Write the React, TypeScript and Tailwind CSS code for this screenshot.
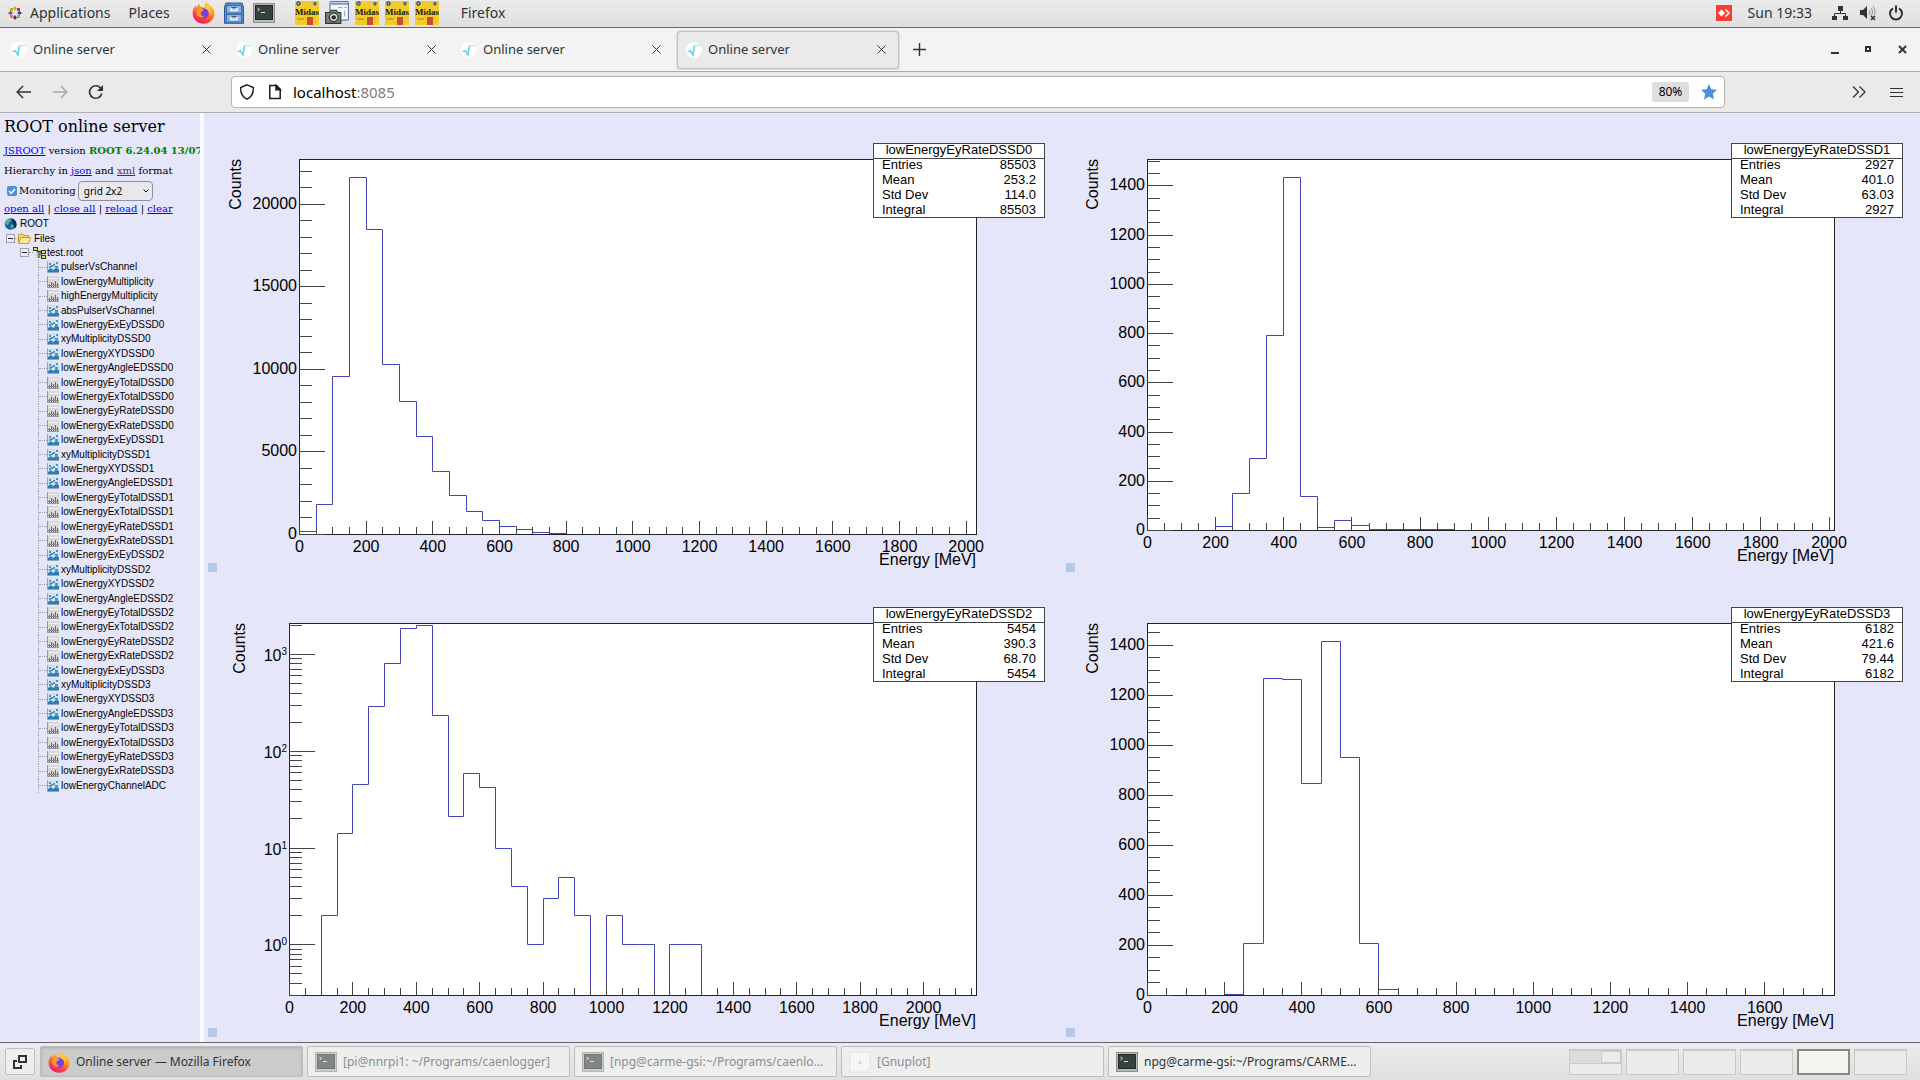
import { useState } from "react";
import type { ReactNode } from "react";

interface HistogramData {
  name: string;
  stats: [string, string][];
  values: number[];
  xMax: number;
  yMin: number;
  yMax: number;
  yMajor: number;
  yMinor: number;
  log?: boolean;
  left: number;
  bottom: number;
  titleX: number;
}

const BIN_WIDTH = 50;
const FRAME_TOP = 46;
const FRAME_RIGHT = 772;

const histograms: HistogramData[] = [
  {
    name: "lowEnergyEyRateDSSD0",
    stats: [
      ["Entries", "85503"],
      ["Mean", "253.2"],
      ["Std Dev", "114.0"],
      ["Integral", "85503"],
    ],
    values: [161, 1835, 9576, 21631, 18486, 10301, 8023, 5947, 3810, 2360, 1390, 867, 504, 282, 121, 40],
    xMax: 2031,
    yMin: 0,
    yMax: 22703,
    yMajor: 5000,
    yMinor: 1000,
    left: 95,
    bottom: 421,
    titleX: 37,
  },
  {
    name: "lowEnergyEyRateDSSD1",
    stats: [
      ["Entries", "2927"],
      ["Mean", "401.0"],
      ["Std Dev", "63.03"],
      ["Integral", "2927"],
    ],
    values: [0, 0, 0, 0, 15, 149, 294, 794, 1435, 138, 12, 42, 22, 3, 5, 3, 3, 3],
    xMax: 2016,
    yMin: 0,
    yMax: 1507,
    yMajor: 200,
    yMinor: 50,
    left: 85,
    bottom: 417,
    titleX: 36,
  },
  {
    name: "lowEnergyEyRateDSSD2",
    stats: [
      ["Entries", "5454"],
      ["Mean", "390.3"],
      ["Std Dev", "68.70"],
      ["Integral", "5454"],
    ],
    values: [0, 0, 2, 14, 45, 292, 807, 1858, 1980, 234, 21, 59, 42, 10, 4, 1, 3, 5, 2, 0, 2, 1, 1, 0, 1, 1],
    xMax: 2167,
    yMin: 0.299,
    yMax: 2093,
    yMajor: 10,
    yMinor: 1,
    log: true,
    left: 85,
    bottom: 418,
    titleX: 41,
  },
  {
    name: "lowEnergyEyRateDSSD3",
    stats: [
      ["Entries", "6182"],
      ["Mean", "421.6"],
      ["Std Dev", "79.44"],
      ["Integral", "6182"],
    ],
    values: [0, 0, 0, 0, 4, 206, 1269, 1265, 849, 1416, 952, 206, 22],
    xMax: 1781,
    yMin: 0,
    yMax: 1487,
    yMajor: 200,
    yMinor: 50,
    left: 85,
    bottom: 418,
    titleX: 36,
  },
];

const detectorItems = [0, 1, 2, 3].flatMap((n) => [
  { name: `lowEnergyExEyDSSD${n}`, is2d: true },
  { name: `xyMultiplicityDSSD${n}`, is2d: true },
  { name: `lowEnergyXYDSSD${n}`, is2d: true },
  { name: `lowEnergyAngleEDSSD${n}`, is2d: true },
  { name: `lowEnergyEyTotalDSSD${n}`, is2d: false },
  { name: `lowEnergyExTotalDSSD${n}`, is2d: false },
  { name: `lowEnergyEyRateDSSD${n}`, is2d: false },
  { name: `lowEnergyExRateDSSD${n}`, is2d: false },
]);

const treeItems = [
  { name: "pulserVsChannel", is2d: true },
  { name: "lowEnergyMultiplicity", is2d: false },
  { name: "highEnergyMultiplicity", is2d: false },
  { name: "absPulserVsChannel", is2d: true },
  ...detectorItems,
  { name: "lowEnergyChannelADC", is2d: true },
];

function range(step: number, max: number) {
  const out: number[] = [];
  for (let v = 0; v <= max; v += step) out.push(v);
  return out;
}

function logTicks(min: number, max: number) {
  const out: { value: number; exponent: number | null }[] = [];
  for (let e = -1; e <= 3; e++) {
    for (let m = 1; m < 10; m++) {
      const value = m * 10 ** e;
      if (value >= min && value <= max) {
        out.push({ value, exponent: m === 1 ? e : null });
      }
    }
  }
  return out;
}

function Histogram({ data }: { data: HistogramData }) {
  const { left, bottom } = data;
  const toX = (v: number) => left + (v / data.xMax) * (FRAME_RIGHT - left);
  const toY = (v: number) => {
    if (data.log) {
      if (v < data.yMin) return bottom;
      const span = Math.log10(data.yMax / data.yMin);
      return bottom - (Math.log10(v / data.yMin) / span) * (bottom - FRAME_TOP);
    }
    return bottom - (v / data.yMax) * (bottom - FRAME_TOP);
  };
  const snap = (v: number) => Math.round(v) + 0.5;

  let outline = `M${snap(left)} ${snap(bottom)}`;
  data.values.forEach((v, i) => {
    outline += `V${snap(toY(v))}H${snap(toX((i + 1) * BIN_WIDTH))}`;
  });
  outline += `V${snap(bottom)}H${snap(FRAME_RIGHT)}`;

  const yTicks = data.log
    ? logTicks(data.yMin, data.yMax).map((t) => ({ value: t.value, major: t.exponent !== null, exponent: t.exponent }))
    : range(data.yMinor, data.yMax).map((v) => ({ value: v, major: v % data.yMajor === 0, exponent: null }));

  return (
    <div className="relative min-h-0 min-w-0">
      <svg
        viewBox="0 0 858 464"
        preserveAspectRatio="xMidYMin"
        className="block h-full w-full font-['Liberation_Sans',Arial,sans-serif] text-base"
        role="img"
        aria-label={data.name}
      >
        <rect x={left + 0.5} y={FRAME_TOP + 0.5} width={FRAME_RIGHT - left} height={bottom - FRAME_TOP} fill="#fff" />
        <path d={outline} fill="none" stroke="#4444bb" />
        <rect
          x={left + 0.5}
          y={FRAME_TOP + 0.5}
          width={FRAME_RIGHT - left}
          height={bottom - FRAME_TOP}
          fill="none"
          stroke="#222"
        />
        {range(BIN_WIDTH, data.xMax).map((v) => (
          <g key={v}>
            <path d={`M${snap(toX(v))} ${bottom}v${v % 200 === 0 ? -13 : -7}`} stroke="#444" />
            {v % 200 === 0 && (
              <text x={toX(v) + 0.5} y={bottom + 18} textAnchor="middle">
                {v}
              </text>
            )}
          </g>
        ))}
        {yTicks.map((t) => (
          <g key={t.value}>
            <path d={`M${left} ${snap(toY(t.value))}h${t.major ? 26 : 13}`} stroke="#444" />
            {t.major && t.exponent === null && (
              <text x={left - 2} y={toY(t.value) + 5} textAnchor="end">
                {t.value}
              </text>
            )}
            {t.exponent !== null && (
              <text x={left - 2} y={toY(t.value) + 7} textAnchor="end">
                10
                <tspan dy={-6} className="text-[10px]">
                  {t.exponent}
                </tspan>
              </text>
            )}
          </g>
        ))}
        <text x={FRAME_RIGHT} y={bottom + 31} textAnchor="end">
          Energy [MeV]
        </text>
        <text transform={`translate(${data.titleX} ${FRAME_TOP}) rotate(-90)`} textAnchor="end">
          Counts
        </text>
        <g className="text-[13px]">
          <rect x="669.5" y="30.5" width="171" height="74" fill="#fff" stroke="#444" />
          <path d="M669 45.5h172" stroke="#444" />
          <text x="755" y="41" textAnchor="middle">
            {data.name}
          </text>
          {data.stats.map(([label, value], i) => (
            <g key={label}>
              <text x="678" y={56 + i * 15}>
                {label}
              </text>
              <text x="832" y={56 + i * 15} textAnchor="end">
                {value}
              </text>
            </g>
          ))}
        </g>
      </svg>
      <button aria-label="Toggle toolbar" className="absolute bottom-[5px] left-1 size-[9px] bg-[#b6c8e8]" />
    </div>
  );
}

/* ---------- icons ---------- */

function FirefoxIcon({ className }: { className: string }) {
  return (
    <svg viewBox="0 0 24 24" className={className}>
      <defs>
        <linearGradient id="ff-body" x1="0.8" y1="0" x2="0.3" y2="1">
          <stop offset="0" stopColor="#ffe14a" />
          <stop offset="0.45" stopColor="#ff8a1e" />
          <stop offset="0.75" stopColor="#ff3d48" />
          <stop offset="1" stopColor="#e3187a" />
        </linearGradient>
      </defs>
      <path
        d="M15 0.5c.8 2 2.500 3.200 4 4.300 2.700 2 4.500 4.700 4.500 8.200C23.500 19 18.500 23.700 12.300 23.700 5.800 23.700.7 19 .7 12.800.7 9.400 2 6.800 3.800 4.800c.1 1 .5 1.700 1 2.200C5.500 5 6.500 3.600 8 2.900c-.2 1.600.5 2.800 2 3.500 1.500-.2 2.700 0 3.600.4C12.700 4.500 13.300 2.200 15 .5z"
        fill="url(#ff-body)"
      />
      <circle cx="12.300" cy="13" r="5.200" fill="#7542e5" />
      <path d="M5 8.500c3-1.500 6-.8 7.500 1.500-2 .2-3 1-3.500 2.500 0 2 1.500 3.500 3.800 3.500-3.500 2.500-8 .5-8.300-3.500z" fill="#ff9a2e" />
      <path d="M14 8c3 .5 4.500 3 4 6 1.500-1 2.200-4.500.8-7.500-1-1.800-3-3-4-4.500-.8 2.500-.8 4-.8 6z" fill="#ffc83a" />
    </svg>
  );
}

function TerminalIcon({ className }: { className: string }) {
  return (
    <svg viewBox="0 0 22 22" className={className}>
      <rect x="0.5" y="1.500" width="21" height="19" fill="#b8bab6" stroke="#8d8f8b" />
      <rect x="2.500" y="3.500" width="17" height="14" fill="#37423f" stroke="#222b29" />
      <path d="M4.500 6l2 1.500-2 1.500M8 10.500h4" stroke="#dfe6e3" fill="none" />
    </svg>
  );
}

function CabinetIcon() {
  return (
    <svg viewBox="0 0 20 22" className="h-[22px] w-5">
      <path d="M2 1h16l1.500 4v16.300H.5V5z" fill="#5d8fcb" stroke="#2c5a94" />
      <rect x="2.500" y="3.500" width="15" height="7.500" fill="#8db6e4" stroke="#3b6ba8" />
      <rect x="2.500" y="12.500" width="15" height="7.500" fill="#8db6e4" stroke="#3b6ba8" />
      <path d="M7 6v2.500h6V6M7 15v2.500h6V15" fill="none" stroke="#f5f5f5" strokeWidth="1.500" />
      <path d="M7.500 5.500h5M7.500 14.500h5" stroke="#4a4f55" />
    </svg>
  );
}

function MidasIcon() {
  return (
    <svg viewBox="0 0 24 24" className="size-6 font-['Liberation_Serif',serif]">
      <rect width="24" height="24" fill="#f3cb2a" />
      <circle cx="3.500" cy="2.500" r="2.200" fill="#27508c" />
      <circle cx="3.500" cy="2.500" r="0.800" fill="#dfe8f5" />
      <path d="M18.500 1h3v2.500l-1.500 1.500-1.500-1.500z" fill="#54648c" />
      <text x="12" y="13.500" textAnchor="middle" fontSize="9" fontWeight="bold" fill="#1c1a10">
        Midas
      </text>
      <path d="M2 18h7" stroke="#a5861a" />
      <rect x="12" y="16" width="6" height="8" fill="#d8462c" />
      <path d="M15 18v3" stroke="#6a6f95" strokeWidth="2" />
    </svg>
  );
}

function CameraIcon() {
  return (
    <svg viewBox="0 0 22 22" className="size-6">
      <rect x="4.500" y="0.500" width="17" height="17" rx="1" fill="#f4f6f9" stroke="#5c789e" />
      <path d="M5 2.500h16" stroke="#7b99c2" strokeWidth="2" />
      <path d="M12 6h4M18 6h2M18 9v5" stroke="#9aa6b8" />
      <path d="M.5 10.500h4l1-2h5l1 2h3v10H.5z" fill="#7b7f7c" stroke="#313432" />
      <circle cx="8" cy="15" r="4" fill="#d5d9d7" stroke="#222" />
      <circle cx="8" cy="15" r="2" fill="#252b35" />
    </svg>
  );
}

function AppsLogo() {
  return (
    <svg viewBox="0 0 14 14" className="size-[14px]">
      <path d="M7 0l2 2.500L7 5 5 2.500z" fill="#e8a317" />
      <path d="M7 9l2 2.500L7 14l-2-2.500z" fill="#3d3b8e" />
      <path d="M0 7l2.500-2L5 7 2.500 9z" fill="#a2398c" />
      <path d="M9 7l2.500-2L14 7l-2.500 2z" fill="#46358f" />
      <path d="M2 2h3v3H2z" fill="#8fbf30" />
      <path d="M9 2h3v3H9z" fill="#a43a86" />
      <path d="M2 9h3v3H2z" fill="#e38b1c" />
      <path d="M9 9h3v3H9z" fill="#8fbf30" />
    </svg>
  );
}

function Favicon() {
  return (
    <svg viewBox="0 0 16 16" className="size-4 shrink-0">
      <circle cx="8" cy="8" r="8" fill="#fff" />
      <path d="M1.500 9.500l3-.5 2.500 4 1.500-9.500" fill="none" stroke="#5fd9ea" strokeWidth="1.600" />
      <path d="M8.500 3.500h6" stroke="#a5ebf4" strokeWidth="1.200" />
    </svg>
  );
}

function CrossIcon() {
  return (
    <svg viewBox="0 0 9 9" className="size-[9px]">
      <path d="M.5.5l8 8M8.500.5l-8 8" stroke="#2e3436" />
    </svg>
  );
}

function HistIcon({ is2d }: { is2d: boolean }) {
  if (is2d) {
    return (
      <svg viewBox="0 0 12 12" className="size-3 shrink-0">
        <rect width="12" height="12" fill="#cfe2ef" />
        <path d="M.5 0v11.500H12" fill="none" stroke="#8fa9ba" />
        <path d="M1 11V9l3-2 2 2 3-2 3 1v3z" fill="#2b7db5" />
        <path d="M2 3h2M4 5h2M6 4h2M9 2h2M2 6h2M8 6h3" stroke="#2d76a8" strokeWidth="1.300" />
      </svg>
    );
  }
  return (
    <svg viewBox="0 0 12 12" className="size-3 shrink-0">
      <rect width="12" height="12" fill="#d8d8d8" />
      <path d="M.5 0v11.500H12" fill="none" stroke="#999" />
      <path d="M2.500 11V8M4.500 11V6M6.500 11V7M8.500 11V5M10.500 11V7" stroke="#666" />
      <path d="M1 9.500h11" stroke="#888" />
      <path d="M2 2.500h9" stroke="#f3f3f3" />
    </svg>
  );
}

function GlobeIcon() {
  return (
    <svg viewBox="0 0 13 13" className="size-[13px] shrink-0">
      <circle cx="6.500" cy="6" r="5.800" fill="#1560a8" />
      <path d="M7 .5a6 6 0 0 1 4 10C9 9 9 3 7 .5z" fill="#0b2f5e" />
      <path d="M3 2c2-1.500 4-1 4 .5S5 4 4.500 6 2 7 1.300 6 1.500 3 3 2zM7 7c2-1 3 0 2.500 1.500s-2 2-2.500 1.500-.5-2.500 0-3z" fill="#43b88b" />
      <path d="M1 3.500L3.500 1" stroke="#9fd8f5" />
    </svg>
  );
}

function FolderIcon() {
  return (
    <svg viewBox="0 0 13 11" className="h-[11px] w-[13px] shrink-0">
      <path d="M.5 10V2l1-1h3l1 1.500h5V4" fill="#f5d36b" stroke="#c79a2c" />
      <path d="M.5 10.500L3 4.500h9.500L10.500 10.500z" fill="#fde79a" stroke="#c79a2c" />
    </svg>
  );
}

function RootFileIcon() {
  return (
    <svg viewBox="0 0 13 12" className="h-3 w-[13px] shrink-0">
      <rect x="3" y="3" width="6" height="8" fill="#c9c9c9" />
      <path d="M4 4.500h4v4h3M6 4v7" fill="none" stroke="#333" />
      <rect x="0.500" y="0.500" width="4" height="3" fill="#e8e23a" stroke="#333" />
      <rect x="8.500" y="3.500" width="4" height="3" fill="#e8e23a" stroke="#333" />
      <rect x="8.500" y="8.500" width="4" height="3" fill="#e8e23a" stroke="#333" />
    </svg>
  );
}

function MinusBox() {
  return (
    <button aria-label="Collapse" className="flex size-[9px] shrink-0 items-center justify-center border border-gray-400 bg-[#ececf4]">
      <span className="h-px w-[5px] bg-gray-800" />
    </button>
  );
}

/* ---------- desktop panels ---------- */

function TopBar() {
  return (
    <header className="flex h-7 shrink-0 items-center border-b border-[#666] bg-linear-to-b from-[#ebebeb] to-[#dfdfdf] pb-[2px] pl-2 text-sm text-[#2e3436]">
      <button className="flex items-center gap-2">
        <AppsLogo />
        Applications
      </button>
      <button className="ml-[18px]">Places</button>
      <div className="ml-[22px] flex items-center gap-[9px]">
        <FirefoxIcon className="size-[23px]" />
        <CabinetIcon />
        <TerminalIcon className="size-[22px]" />
      </div>
      <div className="ml-5 flex items-center gap-[6px]">
        <MidasIcon />
        <CameraIcon />
        <MidasIcon />
        <MidasIcon />
        <MidasIcon />
      </div>
      <button className="ml-[22px]">Firefox</button>
      <div className="mr-4 ml-auto flex items-center">
        <svg viewBox="0 0 16 16" className="size-4">
          <rect width="16" height="16" fill="#fb3d32" />
          <path d="M5.500 4.500L9 8l-3.500 3.500L2 8z" fill="#fff" />
          <path d="M9.500 4.500L13 8l-3.500 3.500" fill="none" stroke="#fff" strokeWidth="1.500" />
        </svg>
        <span className="ml-4">Sun 19:33</span>
        <svg viewBox="0 0 16 16" className="ml-5 size-4" fill="#2e3436">
          <path d="M6 1h5v5H6zM0 11h5v4H0zM11 11h5v4h-5z" />
          <path d="M8.500 6v3M2.500 11V8.500h11V11" fill="none" stroke="#2e3436" />
        </svg>
        <svg viewBox="0 0 16 16" className="ml-3 size-4">
          <path d="M0 5h3l4-4v13L3 10H0z" fill="#2e3436" />
          <path d="M9 5q1.500 2.500 0 5M11 3q3 4 0 8M13 1q3.500 5 1 9" fill="none" stroke="#a5a8a9" strokeWidth="1.300" />
          <path d="M11 11l4 4M15 11l-4 4" stroke="#2e3436" strokeWidth="1.600" />
        </svg>
        <svg viewBox="0 0 16 16" className="ml-3 size-4" fill="none" stroke="#2e3436" strokeWidth="2">
          <path d="M5 3.300a6 6 0 1 0 6 0M8 .5v7" />
        </svg>
      </div>
    </header>
  );
}

function TabStrip() {
  return (
    <div className="flex h-11 shrink-0 items-center border-b border-[#a9aaaa] bg-[#f3f3f3] text-[13px] text-[#2e3436]">
      <div role="tablist" className="ml-[2px] flex gap-[3px]">
        {[0, 1, 2, 3].map((i) => (
          <div
            key={i}
            className={`flex h-[38px] w-[222px] items-center rounded border px-2 ${
              i === 3 ? "border-[#c0c0c8] bg-[#eaeaea] shadow-[0_0_2px_#aaaab5]" : "border-transparent"
            }`}
          >
            <Favicon />
            <button role="tab" aria-selected={i === 3} className="ml-[6px] flex-1 text-left">
              Online server
            </button>
            <button aria-label="Close tab" className="mr-1">
              <CrossIcon />
            </button>
          </div>
        ))}
      </div>
      <button aria-label="New tab" className="ml-[14px]">
        <svg viewBox="0 0 13 13" className="size-[13px]">
          <path d="M6.500 0v13M0 6.500h13" stroke="#2e3436" strokeWidth="1.400" />
        </svg>
      </button>
      <div className="mr-[13px] ml-auto flex items-center gap-[25px]">
        <button aria-label="Minimize">
          <svg viewBox="0 0 9 9" className="size-[9px]">
            <path d="M1 8h8" stroke="#2e3436" strokeWidth="2" />
          </svg>
        </button>
        <button aria-label="Maximize">
          <svg viewBox="0 0 9 9" className="size-[9px]">
            <rect x="2" y="2" width="4" height="4" fill="none" stroke="#2e3436" strokeWidth="2" />
          </svg>
        </button>
        <button aria-label="Close window">
          <svg viewBox="0 0 9 9" className="size-[9px]">
            <path d="M1 1l7 7M8 1L1 8" stroke="#2e3436" strokeWidth="2" />
          </svg>
        </button>
      </div>
    </div>
  );
}

function NavBar() {
  return (
    <div className="flex h-[41px] shrink-0 items-center border-b border-[#b0b0b0] bg-[#eaeaea] pl-4 text-[#2e3436]">
      <div className="flex items-center gap-5">
        <button aria-label="Back">
          <svg viewBox="0 0 16 16" className="size-4" fill="none" stroke="#2e3436" strokeWidth="1.500">
            <path d="M15 8H1.500M7 2L1.200 8 7 14" />
          </svg>
        </button>
        <button aria-label="Forward" disabled>
          <svg viewBox="0 0 16 16" className="size-4" fill="none" stroke="#a6a8a9" strokeWidth="1.500">
            <path d="M1 8h13.500M9 2l5.800 6L9 14" />
          </svg>
        </button>
        <button aria-label="Reload">
          <svg viewBox="0 0 16 16" className="size-4" fill="none" stroke="#2e3436" strokeWidth="1.600">
            <path d="M13.800 9.500A6.200 6.200 0 1 1 12.500 4L14 5.500" />
            <path d="M15 1v6H9z" fill="#2e3436" stroke="none" />
          </svg>
        </button>
      </div>
      <div className="mr-[127px] ml-[127px] flex h-8 flex-1 items-center rounded border border-[#b4b4b4] bg-white px-[7px]">
        <svg viewBox="0 0 16 16" className="size-4" fill="none" stroke="#1c1c1c" strokeWidth="1.400">
          <path d="M8 .8L14.300 3.500c.3 5-1.500 9.500-6.300 11.700C3.200 13 1.400 8.500 1.700 3.500z" />
        </svg>
        <svg viewBox="0 0 16 16" className="ml-3 size-4" fill="none" stroke="#1c1c1c" strokeWidth="1.500">
          <path d="M2.800 1.500h6.700l3.700 3.700v9.300H2.800z" />
          <path d="M9 1.500v4.200h4.200z" fill="#1c1c1c" />
        </svg>
        <label className="relative ml-[10px] flex flex-1 items-center text-[15px]">
          <span className="pointer-events-none absolute text-black">
            localhost<span className="text-[#808080]">:8085</span>
          </span>
          <input aria-label="Address" className="w-full bg-transparent outline-none" />
        </label>
        <button className="flex h-5 w-[37px] items-center justify-center rounded-xs bg-[#dedede] text-xs text-black">
          80%
        </button>
        <button aria-label="Bookmark" className="ml-3">
          <svg viewBox="0 0 16 16" className="size-4" fill="#4a90d9">
            <path d="M8 0l2.300 5.200 5.700.6-4.200 3.900 1.200 5.800L8 12.600l-5 2.900 1.200-5.800L0 5.800l5.700-.6z" />
          </svg>
        </button>
      </div>
      <div className="mr-[17px] flex items-center gap-6">
        <button aria-label="More tools">
          <svg viewBox="0 0 14 14" className="size-[14px]" fill="none" stroke="#2e3436" strokeWidth="1.300">
            <path d="M1 1.500L6.500 7 1 12.500M7.500 1.500L13 7l-5.500 5.500" />
          </svg>
        </button>
        <button aria-label="Menu">
          <svg viewBox="0 0 13 11" className="h-[11px] w-[13px]" stroke="#2e3436">
            <path d="M0 1.500h13M0 5.500h13M0 9.500h13" />
          </svg>
        </button>
      </div>
    </div>
  );
}

function Link({ children, visited }: { children: ReactNode; visited?: boolean }) {
  return (
    <a href="#" className={`underline ${visited ? "text-[#551a8b]" : "text-[#0000ee]"}`}>
      {children}
    </a>
  );
}

function Sidebar() {
  const [monitoring, setMonitoring] = useState(true);
  const [layout, setLayout] = useState("grid 2x2");

  return (
    <aside className="w-[200px] shrink-0 overflow-hidden pt-1 pl-1 font-['DejaVu_Serif',serif] text-[10px] leading-[14px] whitespace-nowrap text-black">
      <h1 className="text-base leading-5">ROOT online server</h1>
      <p className="mt-[7px]">
        <Link>JSROOT</Link> version <b className="text-[#008000]">ROOT 6.24.04 13/07/2021</b>
      </p>
      <p className="mt-[6px]">
        Hierarchy in <Link>json</Link> and <Link visited>xml</Link> format
      </p>
      <div className="mt-[3px] flex h-5 items-center">
        <label className="flex items-center gap-[2px]">
          <span className="relative ml-[3px] flex">
            <input
              type="checkbox"
              checked={monitoring}
              onChange={(e) => setMonitoring(e.target.checked)}
              className="size-[10px] appearance-none rounded-xs bg-white checked:bg-[#4a90d9]"
            />
            {monitoring && (
              <svg viewBox="0 0 10 10" className="pointer-events-none absolute inset-0" fill="none" stroke="#fff" strokeWidth="1.500">
                <path d="M2 5l2.200 2.300L8 3" />
              </svg>
            )}
          </span>
          Monitoring
        </label>
        <span className="relative ml-[2px] flex items-center">
          <select
            aria-label="Layout"
            value={layout}
            onChange={(e) => setLayout(e.target.value)}
            className="h-5 w-[75px] appearance-none rounded border border-[#8f8f9d] bg-[#e9e9ed] pl-[5px] font-['Noto_Sans',sans-serif] text-[10px]"
          >
            <option>grid 2x2</option>
            <option>grid 1x1</option>
            <option>simple</option>
          </select>
          <svg viewBox="0 0 6 4" className="pointer-events-none absolute right-1 h-1 w-[6px]" fill="none" stroke="#111">
            <path d="M.5.5L3 3 5.500.5" />
          </svg>
        </span>
      </div>
      <p className="mt-px">
        <Link>open all</Link> | <Link>close all</Link> | <Link>reload</Link> | <Link>clear</Link>
      </p>
      <ul className="mt-px grid h-[576px] auto-rows-fr items-center font-['Liberation_Sans',Arial,sans-serif]">
        <li className="flex items-center gap-[3px]">
          <GlobeIcon />
          ROOT
        </li>
        <li className="flex items-center pl-[2px]">
          <MinusBox />
          <span className="w-[3px] border-t border-dotted border-gray-400" />
          <FolderIcon />
          <span className="ml-[3px]">Files</span>
        </li>
        <li className="flex items-center pl-4">
          <MinusBox />
          <span className="w-1 border-t border-dotted border-gray-400" />
          <RootFileIcon />
          <span className="ml-px">test.root</span>
        </li>
        {treeItems.map((item) => (
          <li key={item.name} className="ml-[34px] flex h-full items-center border-l border-dotted border-gray-400">
            <span className="w-2 border-t border-dotted border-gray-400" />
            <HistIcon is2d={item.is2d} />
            <span className="ml-[2px]">{item.name}</span>
          </li>
        ))}
      </ul>
    </aside>
  );
}

const tasks = [
  { title: "Online server — Mozilla Firefox", kind: "firefox" },
  { title: "[pi@nnrpi1: ~/Programs/caenlogger]", kind: "terminal", minimized: true },
  { title: "[npg@carme-gsi:~/Programs/caenlo...", kind: "terminal", minimized: true },
  { title: "[Gnuplot]", kind: "gnuplot", minimized: true },
  { title: "npg@carme-gsi:~/Programs/CARME...", kind: "terminal" },
];

function TaskBar() {
  return (
    <footer className="flex h-[38px] shrink-0 items-center border-t border-[#666] bg-linear-to-b from-[#ebebeb] to-[#dfdfdf] pr-[13px] pl-[5px] text-xs text-[#2e3436]">
      <button aria-label="Show desktop" className="flex h-[27px] w-[30px] items-center justify-center rounded-xs border border-[#c0c0c0] bg-[#eee]">
        <svg viewBox="0 0 14 14" className="size-[14px]" fill="none" stroke="#2e3436" strokeWidth="2">
          <path d="M6 1h7v6H6zM4 6H1v7h7v-3" />
        </svg>
      </button>
      <nav className="ml-[5px] flex gap-1">
        {tasks.map((task) => (
          <button
            key={task.title}
            className={`flex h-[31px] w-[263px] items-center gap-[6px] rounded-xs border border-[#bdbdbd] px-[7px] ${
              task.kind === "firefox" ? "bg-[#cbcbcb] shadow-[inset_0_1px_3px_#aaa]" : "bg-[#eee]"
            } ${task.minimized ? "text-[#8b8e8f]" : ""}`}
          >
            {task.kind === "firefox" && <FirefoxIcon className="size-[22px] shrink-0" />}
            {task.kind === "terminal" && (
              <TerminalIcon className={`size-[22px] shrink-0 ${task.minimized ? "opacity-60" : ""}`} />
            )}
            {task.kind === "gnuplot" && (
              <svg viewBox="0 0 22 22" className="size-[22px] shrink-0">
                <path d="M1 1h20v16l-4 4H1z" fill="#f6f6f6" stroke="#e2e2e2" />
                <path d="M11 9l2 4H9z" fill="#d6d6d6" />
              </svg>
            )}
            <span className="truncate">{task.title}</span>
          </button>
        ))}
      </nav>
      <div className="ml-auto flex gap-1">
        {[0, 1, 2, 3, 4, 5].map((i) => (
          <button
            key={i}
            aria-label={`Workspace ${i + 1}`}
            className={`flex h-[26px] w-[53px] flex-col ${
              i === 4 ? "border-2 border-[#888885] bg-[#f5f4f0]" : "border border-t-2 border-[#c9c9c9] bg-[#ebebeb]"
            }`}
          >
            {i === 0 && (
              <span className="flex h-[13px] w-full justify-end border-b border-[#c9c9c9] bg-[#dcdcdc]">
                <span className="h-3 w-5 border border-[#c9c9c9] bg-[#ebebeb]" />
              </span>
            )}
          </button>
        ))}
      </div>
    </footer>
  );
}

export default function App() {
  return (
    <div className="flex h-screen flex-col overflow-hidden font-['Noto_Sans',sans-serif]">
      <TopBar />
      <TabStrip />
      <NavBar />
      <main className="flex min-h-0 flex-1 bg-[#e6e6fa]">
        <Sidebar />
        <div className="w-1 shrink-0 bg-[#f0ffff]" />
        <section className="grid min-w-0 flex-1 grid-cols-2 grid-rows-[minmax(0,464fr)_minmax(0,465fr)]">
          {histograms.map((h) => (
            <Histogram key={h.name} data={h} />
          ))}
        </section>
      </main>
      <TaskBar />
    </div>
  );
}
